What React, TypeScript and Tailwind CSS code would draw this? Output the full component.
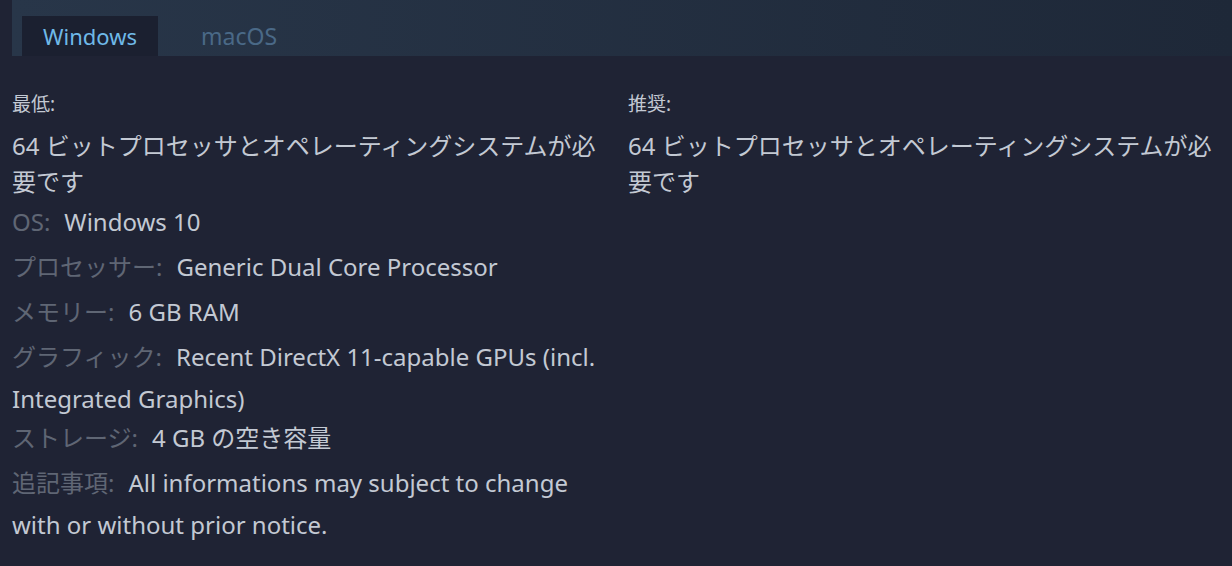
import React from "react";

const font = { fontFamily: '"Noto Sans", "Noto Sans CJK JP", sans-serif' };

function Row({
  label,
  children,
  className = "mb-[3px]",
}: {
  label: string;
  children: React.ReactNode;
  className?: string;
}) {
  return (
    <li className={`leading-[42px] whitespace-nowrap ${className}`}>
      <span className="text-[#5f6674]">{label}</span>
      <span className="ml-[14px] text-[#c3c9d3]">{children}</span>
    </li>
  );
}

export default function App() {
  return (
    <div className="w-[1232px] h-[566px] bg-[#1f2334] overflow-hidden" style={font}>
      <div className="ml-[12px] h-[56px] bg-gradient-to-r from-[#283649] to-[#1e2838] flex items-end pl-[10px]">
        <div className="h-[40px] w-[136px] bg-[#1b2030] flex items-center justify-center text-[22px] text-[#6fb9e8]">
          Windows
        </div>
        <div className="h-[40px] w-[162px] flex items-center justify-center text-[23px] text-[#4a6987]">
          macOS
        </div>
      </div>
      <div className="flex pl-[12px] pt-[36px]">
        <div className="w-[616px]">
          <div className="text-[19px] text-[#c3c9d3] leading-[24px]">最低:</div>
          <ul className="mt-[12px]">
            <li className="leading-[36px] text-[#c3c9d3] text-[24px] whitespace-nowrap">
              64 ビットプロセッサとオペレーティングシステムが必<br />要です
            </li>
          </ul>
          <ul className="text-[24px] mt-[1px]">
            <Row label="OS:">Windows 10</Row>
            <Row label="プロセッサー:">Generic Dual Core Processor</Row>
            <Row label="メモリー:">6 GB RAM</Row>
            <Row label="グラフィック:" className="mb-[-3px]">
              Recent DirectX 11-capable GPUs (incl.
              <br />
              Integrated Graphics)
            </Row>
            <Row label="ストレージ:">4 GB の空き容量</Row>
            <Row label="追記事項:">
              All informations may subject to change
              <br />
              with or without prior notice.
            </Row>
          </ul>
        </div>
        <div className="flex-1">
          <div className="text-[19px] text-[#c3c9d3] leading-[24px]">推奨:</div>
          <ul className="mt-[12px]">
            <li className="leading-[36px] text-[#c3c9d3] text-[24px] whitespace-nowrap">
              64 ビットプロセッサとオペレーティングシステムが必<br />要です
            </li>
          </ul>
        </div>
      </div>
    </div>
  );
}
